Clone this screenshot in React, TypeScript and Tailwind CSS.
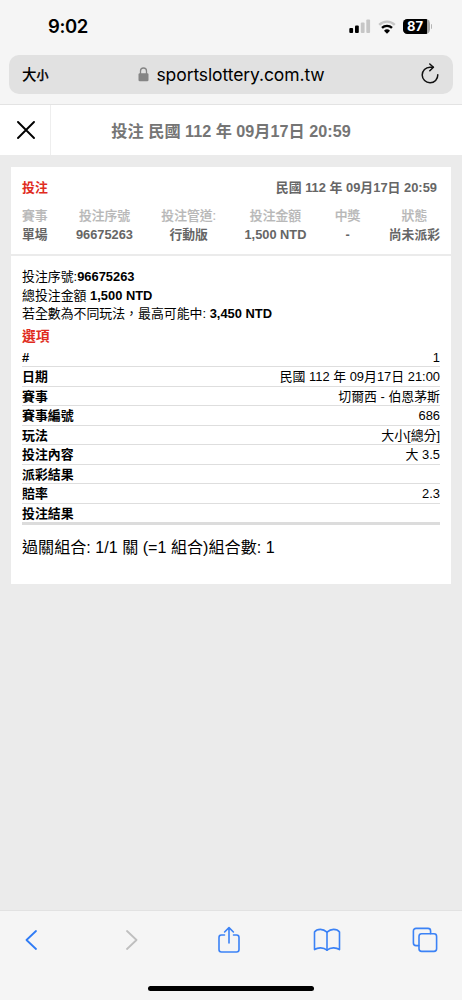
const SUMMARY = [
  { label: "賽事", value: "單場" },
  { label: "投注序號", value: "96675263" },
  { label: "投注管道:", value: "行動版" },
  { label: "投注金額", value: "1,500 NTD" },
  { label: "中獎", value: "-" },
  { label: "狀態", value: "尚未派彩" },
];

const DETAILS = [
  { label: "#", value: "1" },
  { label: "日期", value: "民國 112 年 09月17日 21:00" },
  { label: "賽事", value: "切爾西 - 伯恩茅斯" },
  { label: "賽事編號", value: "686" },
  { label: "玩法", value: "大小[總分]" },
  { label: "投注內容", value: "大 3.5" },
  { label: "派彩結果", value: "" },
  { label: "賠率", value: "2.3" },
  { label: "投注結果", value: "" },
];

const StatusBar = () => (
  <div className="flex h-[55px] items-start justify-between pr-[30px] pl-12 pt-[14px] font-['Inter',sans-serif]">
    <span className="text-[18.5px] leading-6 font-semibold tracking-[-0.4px] text-black">
      9:02
    </span>
    <div className="flex items-center gap-[7px] pt-[5px]">
      <svg width="22" height="15" viewBox="0 0 22 15">
        <rect x="0.3" y="9" width="3.8" height="5" rx="1" fill="#000" />
        <rect x="6" y="6.5" width="3.8" height="7.5" rx="1" fill="#000" />
        <rect x="11.8" y="3.5" width="3.8" height="10.5" rx="1" fill="#c6c6c6" />
        <rect x="17.3" y="0.5" width="3.8" height="13.5" rx="1" fill="#c6c6c6" />
      </svg>
      <svg width="18" height="14" viewBox="0 0 18 14" fill="none">
        <path d="M1.2 4.8a11.2 11.2 0 0 1 15.6 0" stroke="#c6c6c6" strokeWidth="2.4" />
        <path d="M4 7.9a7.3 7.3 0 0 1 10 0" stroke="#000" strokeWidth="2.4" />
        <path d="M9 13.7 6 10.7a4.4 4.4 0 0 1 6 0Z" fill="#000" />
      </svg>
      <div className="flex items-center">
        <div className="flex h-[15px] w-[27px] overflow-hidden rounded-[4.5px] bg-[#a6a6a6]">
          <span className="w-6 bg-black pl-px text-center text-[13px] leading-[15px] font-bold text-white">
            87
          </span>
        </div>
        <span className="ml-px h-[5px] w-[1.5px] rounded-r bg-[#b5b5b5]" />
      </div>
    </div>
  </div>
);

const AddressBar = () => (
  <div className="mx-[9px] flex h-[39px] items-center justify-between rounded-[10px] bg-[#e1e1e1] pr-[14px] pl-[13px] text-black">
    <div className="flex w-8 items-baseline font-['Noto_Sans_CJK_TC',sans-serif] leading-6 font-medium">
      <span className="text-[14.5px]">大</span>
      <span className="text-[12px] [-webkit-text-stroke:0.3px]">小</span>
    </div>
    <div className="flex items-center gap-[7px]">
      <svg width="11" height="15" viewBox="0 0 11 15" fill="none">
        <path d="M2.5 7V4a3 3 0 0 1 6 0v3" stroke="#858585" strokeWidth="1.3" />
        <rect x="0.5" y="6.3" width="10" height="8" rx="1.3" fill="#858585" />
      </svg>
      <span className="pt-px font-['Inter',sans-serif] text-[17.5px] leading-6 tracking-[-0.1px]">
        sportslottery.com.tw
      </span>
    </div>
    <div className="flex w-[30px] justify-end">
      <svg
        width="18"
        height="21"
        viewBox="0 0 18 21"
        fill="none"
        stroke="#111"
        strokeWidth="1.5"
        strokeLinecap="round"
        strokeLinejoin="round"
        className="-mt-[2px]"
      >
        <path d="M16.8 11.8a7.8 7.8 0 1 1-7.8-7.6h3.2" />
        <path d="m8.8 1 3.6 3.3-3.6 3.5" />
      </svg>
    </div>
  </div>
);

const Toolbar = () => (
  <div className="h-[90px] shrink-0 border-t border-[#e2e2e2] bg-[#f5f5f5]">
    <div className="flex h-[57px] items-center justify-between pr-6 pl-[25px]">
      <svg width="12" height="20" viewBox="0 0 12 20" fill="none" stroke="#2f7bf5" strokeWidth="1.8" strokeLinecap="round" strokeLinejoin="round">
        <path d="M11 1 1.5 10l9.5 9" />
      </svg>
      <svg width="12" height="20" viewBox="0 0 12 20" fill="none" stroke="#bfbfbf" strokeWidth="1.8" strokeLinecap="round" strokeLinejoin="round" className="ml-[89px]">
        <path d="m1 1 9.5 9L1 19" />
      </svg>
      <svg width="22" height="28" viewBox="0 0 22 28" fill="none" stroke="#3b82f6" strokeWidth="1.6" strokeLinecap="round" strokeLinejoin="round" className="ml-[80px]">
        <path d="M6.5 9H3.4A2.4 2.4 0 0 0 1 11.4v12.2A2.4 2.4 0 0 0 3.4 26h15.2a2.4 2.4 0 0 0 2.4-2.4V11.4A2.4 2.4 0 0 0 18.6 9h-3.1" />
        <path d="M11 17V1.8M6.6 6 11 1.6 15.4 6" />
      </svg>
      <svg width="28" height="24" viewBox="0 0 28 24" fill="none" stroke="#3b82f6" strokeWidth="1.6" strokeLinecap="round" strokeLinejoin="round" className="ml-[73px]">
        <path d="M14 4.2C11.8 2.2 9.8 1.4 7.4 1.4 4.6 1.4 2.6 2.4 1.5 4v17.6c3.4-2.4 9-2.4 12.5.6 3.5-3 9.1-3 12.5-.6V4c-1.1-1.6-3.1-2.6-5.9-2.6-2.4 0-4.4.8-6.6 2.8Z" />
        <path d="M14 4.2v18" />
      </svg>
      <svg width="26" height="26" viewBox="0 0 26 26" fill="none" stroke="#3b82f6" strokeWidth="1.6" strokeLinecap="round" strokeLinejoin="round" className="ml-[71px]">
        <path d="M6.8 18.6H4A2.6 2.6 0 0 1 1.4 16V4A2.6 2.6 0 0 1 4 1.4h12A2.6 2.6 0 0 1 18.6 4v2.6" />
        <rect x="7" y="6.8" width="17.6" height="17.6" rx="2.6" />
      </svg>
    </div>
    <div className="mx-auto mt-[18px] h-[5px] w-[166px] rounded-full bg-black" />
  </div>
);

export default function App() {
  return (
    <div
      lang="zh-TW"
      className="flex h-[1000px] w-[462px] flex-col overflow-hidden bg-[#ebebeb] font-['Liberation_Sans','Noto_Sans_CJK_TC',sans-serif] text-[12.9px] whitespace-nowrap"
    >
      <div className="h-[105px] shrink-0 border-b border-[#e3e3e3] bg-[#f5f5f5]">
        <StatusBar />
        <AddressBar />
      </div>

      <header className="flex h-[50px] shrink-0 bg-white">
        <div className="flex w-[51px] items-center justify-center border-r border-[#eeeeee] pl-px">
          <svg width="18" height="18" viewBox="0 0 18 18" stroke="#000" strokeWidth="1.9" strokeLinecap="round">
            <path d="m1 1 16 16M17 1 1 17" />
          </svg>
        </div>
        <h1 className="flex-1 pr-[51px] text-center text-[16.2px] leading-[52px] font-bold text-[#757575]">
          投注 民國 112 年 09月17日 20:59
        </h1>
      </header>

      <main className="flex-1 px-[11px] pt-3">
        <section className="h-[87px] bg-white px-[11px] pt-[11px]">
          <div className="flex h-5 items-center justify-between pr-[3px] font-bold leading-5">
            <span className="text-[#e02b20]">投注</span>
            <span className="text-[#666666]">民國 112 年 09月17日 20:59</span>
          </div>
          <div className="mt-[9px] flex justify-between text-center text-[12.8px] font-bold">
            {SUMMARY.map((item) => (
              <div key={item.label}>
                <div className="h-[18.5px] leading-[18.5px] font-medium text-[#b8b8b8] [-webkit-text-stroke:0.2px]">
                  {item.label}
                </div>
                <div className="h-[18.5px] leading-[18.5px] text-[#666666]">
                  {item.value}
                </div>
              </div>
            ))}
          </div>
        </section>

        <section className="mt-[2px] h-[328px] bg-white px-[11px] pt-[12px] text-black">
          <div className="leading-[18.5px]">
            <p className="h-[18.5px]">
              投注序號:<b>96675263</b>
            </p>
            <p className="h-[18.5px]">
              總投注金額 <b>1,500 NTD</b>
            </p>
            <p className="h-[18.5px]">
              若全數為不同玩法，最高可能中: <b>3,450 NTD</b>
            </p>
          </div>
          <h2 className="h-[24.5px] text-[13.8px] leading-[25px] font-bold text-[#e02b20]">
            選項
          </h2>
          <dl className="border-b-[3px] border-[#dcdcdc]">
            {DETAILS.map((row) => (
              <div
                key={row.label}
                className="flex h-[19.45px] justify-between border-b border-[#dedede] leading-[20px] last:h-[18.5px] last:border-b-0"
              >
                <dt className="font-bold">{row.label}</dt>
                <dd>{row.value}</dd>
              </div>
            ))}
          </dl>
          <p className="mt-[10px] text-[16.1px] leading-6">
            過關組合: 1/1 關 (=1 組合)組合數: 1
          </p>
        </section>
      </main>

      <Toolbar />
    </div>
  );
}
